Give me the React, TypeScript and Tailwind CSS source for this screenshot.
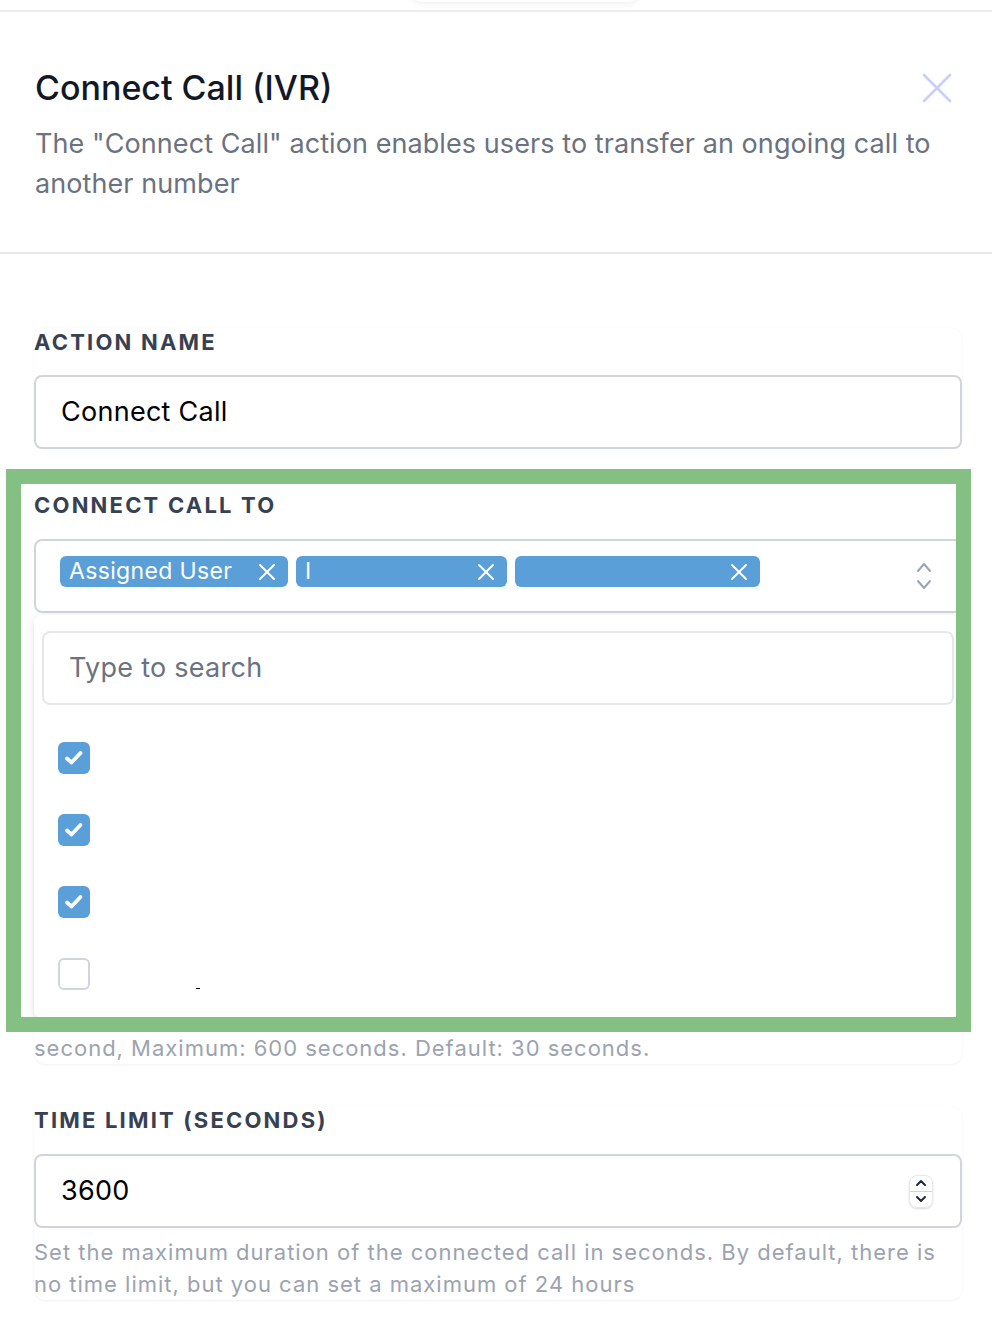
import React from 'react'

const chips = [
  { label: 'Assigned User', width: 'w-[228px]' },
  { label: 'I', width: 'w-[211px]' },
  { label: '', width: 'w-[245px]' },
]

const options = [true, true, true, false]

const CrossIcon = ({ className }: { className?: string }) => (
  <svg viewBox="0 0 18 18" className={className} fill="none" stroke="currentColor" strokeWidth="2" strokeLinecap="round">
    <path d="M2 2L16 16" />
    <path d="M16 2L2 16" />
  </svg>
)

const ChevronUpDown = () => (
  <svg viewBox="0 0 16 30" className="h-[30px] w-[16px] text-[#9ca3af]" fill="none" stroke="currentColor" strokeWidth="2" strokeLinecap="round" strokeLinejoin="round">
    <path d="M2 10L8 3L14 10" />
    <path d="M2 20L8 27L14 20" />
  </svg>
)

const CheckIcon = () => (
  <svg viewBox="0 0 32 32" className="h-[32px] w-[32px]" fill="none" stroke="white" strokeWidth="3.8" strokeLinecap="round" strokeLinejoin="round">
    <path d="M9 16.5L13.5 20.5L22.5 11" />
  </svg>
)

const FieldLabel = ({ children }: { children: React.ReactNode }) => (
  <div className="text-[22px] leading-[28px] font-bold uppercase tracking-[0.1em] text-[#374151]">{children}</div>
)

const HelperText = ({ children }: { children: React.ReactNode }) => (
  <p className="mt-2 text-[22px] leading-[32px] tracking-[0.045em] text-[#9ca3af]">{children}</p>
)

export default function App() {
  return (
    <div className="relative min-h-[1318px] w-full overflow-hidden bg-white font-['Inter','Liberation_Sans',sans-serif]">
      {/* leftover of the element above the panel */}
      <div className="relative h-[10px]">
        <div className="absolute -top-[24px] left-[410px] h-[26px] w-[230px] rounded-xl bg-white shadow-[0_2px_6px_rgba(0,0,0,0.06)]" />
      </div>
      <div className="h-[2px] bg-[#ececf2]" />

      <div className="pt-[56px] pr-[40px] pb-[48px] pl-[35px]">
        <div className="flex items-center justify-between">
          <h1 className="text-[34px] leading-[40px] font-medium text-[#111827]">Connect Call (IVR)</h1>
          <button className="shrink-0 text-[#c7cffb]">
            <svg viewBox="0 0 30 30" className="h-[30px] w-[30px]" fill="none" stroke="currentColor" strokeWidth="2.6" strokeLinecap="round">
              <path d="M2 2L28 28" />
              <path d="M28 2L2 28" />
            </svg>
          </button>
        </div>
        <p className="mt-[16px] text-[27px] leading-[40px] tracking-[0.003em] text-[#6b7280]">
          The "Connect Call" action enables users to transfer an ongoing call to another number
        </p>
      </div>
      <div className="h-[2px] bg-[#e8e8ec]" />

      <div className="flex flex-col gap-[42px] pt-[74px] pr-[30px] pb-[16px] pl-[34px]">
        {/* action name */}
        <div className="rounded-xl shadow-[0_0_3px_rgba(0,0,0,0.05)]">
          <FieldLabel>Action Name</FieldLabel>
          <div className="mt-[19px] flex h-[74px] items-center rounded-lg border-2 border-[#d1d5db] px-[25px] text-[27px] tracking-[0.01em] text-black">
            Connect Call
          </div>
        </div>

        {/* connect call to */}
        <div className="relative z-10 rounded-xl">
          <FieldLabel>Connect Call To</FieldLabel>
          <div className="mt-[20px] flex h-[74px] items-center rounded-lg border-2 border-[#d1d5db] pr-[28px] pl-[24px]">
            <div className="-mt-[9px] flex flex-1 items-center gap-[8px]">
              {chips.map((chip, i) => (
                <div
                  key={i}
                  className={`flex h-[31px] items-center justify-between rounded-md bg-[#5a9fd8] pr-[12px] pl-[9px] text-[23px] leading-none tracking-[0.015em] text-white ${chip.width}`}
                >
                  <span>{chip.label}</span>
                  <CrossIcon className="h-[18px] w-[18px]" />
                </div>
              ))}
            </div>
            <ChevronUpDown />
          </div>

          {/* open dropdown */}
          <div className="absolute top-full right-0 left-0 mt-[2px] h-[403px] rounded-lg bg-white px-[8px] pt-[16px] shadow-[0_2px_8px_rgba(0,0,0,0.12)]">
            <div className="flex h-[74px] items-center rounded-lg border-2 border-[#e5e7eb] px-[25px] text-[27px] tracking-[0.01em] text-[#6b7280]">
              Type to search
            </div>
            <div className="mt-[17px] flex flex-col">
              {options.map((checked, i) => (
                <div key={i} className="relative flex h-[72px] items-center pl-[16px]">
                  {checked ? (
                    <div className="h-[32px] w-[32px] rounded-md bg-[#5a9fd8]">
                      <CheckIcon />
                    </div>
                  ) : (
                    <div className="h-[32px] w-[32px] rounded-md border-2 border-[#d1d5db] bg-white" />
                  )}
                  {i === options.length - 1 && <div className="absolute top-[50px] left-[154px] h-[1px] w-[4px] bg-black" />}
                </div>
              ))}
            </div>
          </div>
        </div>

        {/* field hidden behind the dropdown, only its last helper line shows */}
        <div className="flex h-[409px] flex-col justify-end rounded-xl shadow-[0_1px_3px_rgba(0,0,0,0.06)]">
          <p className="text-[22px] leading-[32px] tracking-[0.045em] text-[#9ca3af]">second, Maximum: 600 seconds. Default: 30 seconds.</p>
        </div>

        {/* time limit */}
        <div className="rounded-xl shadow-[0_1px_3px_rgba(0,0,0,0.06)]">
          <FieldLabel>Time Limit (Seconds)</FieldLabel>
          <div className="mt-[20px] flex h-[74px] items-center justify-between rounded-lg border-2 border-[#d1d5db] pr-[27px] pl-[25px] text-[27px] tracking-[0.01em] text-black">
            <span>3600</span>
            <div className="flex h-[33px] w-[24px] flex-col overflow-hidden rounded-lg border border-[#e5e7eb] shadow-[0_1px_2px_rgba(0,0,0,0.15)]">
              <div className="flex flex-1 items-center justify-center border-b border-[#d1d5db]">
                <svg viewBox="0 0 12 8" className="h-[8px] w-[12px]" fill="none" stroke="#1f2937" strokeWidth="2" strokeLinecap="round" strokeLinejoin="round">
                  <path d="M2 6L6 2L10 6" />
                </svg>
              </div>
              <div className="flex flex-1 items-center justify-center">
                <svg viewBox="0 0 12 8" className="h-[8px] w-[12px]" fill="none" stroke="#1f2937" strokeWidth="2" strokeLinecap="round" strokeLinejoin="round">
                  <path d="M2 2L6 6L10 2" />
                </svg>
              </div>
            </div>
          </div>
          <HelperText>
            Set the maximum duration of the connected call in seconds. By default, there is no time limit, but you can set a maximum of 24 hours
          </HelperText>
        </div>
      </div>

      {/* highlight frame */}
      <div className="pointer-events-none absolute top-[469px] left-[6px] z-20 h-[563px] w-[965px] border-[15px] border-[#84bf83]" />
    </div>
  )
}
